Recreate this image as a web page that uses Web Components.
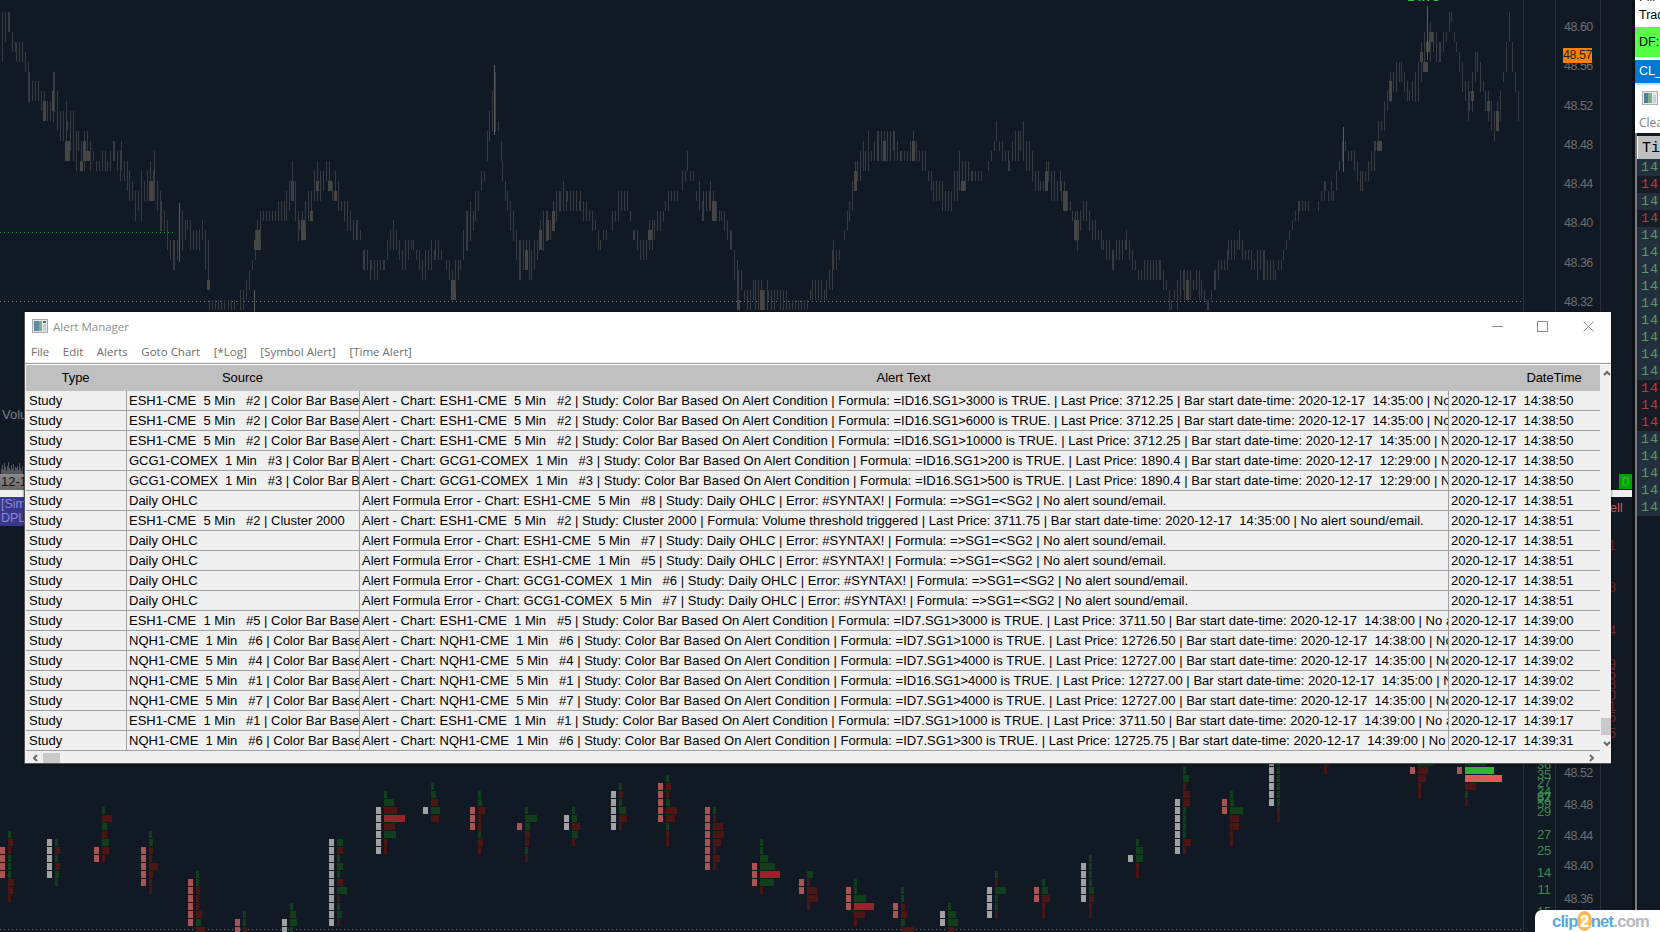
<!DOCTYPE html>
<html>
<head>
<meta charset="utf-8">
<title>Alert Manager</title>
<style>
html, body { margin: 0; padding: 0; background: #111a24; overflow: hidden; }
</style>
</head>
<body>
<trade-desktop>
    <price-chart slot="chart"></price-chart>
    <side-panel slot="side"></side-panel>
    <alert-window slot="window" heading="Alert Manager">
        <span slot="menu">File</span>
        <span slot="menu">Edit</span>
        <span slot="menu">Alerts</span>
        <span slot="menu">Goto Chart</span>
        <span slot="menu">[*Log]</span>
        <span slot="menu">[Symbol Alert]</span>
        <span slot="menu">[Time Alert]</span>
        <alert-table></alert-table>
    </alert-window>
    <clip-logo slot="logo"></clip-logo>
</trade-desktop>

<script>
"use strict"
{
    const template = document.createElement('template');
    template.innerHTML = `
<style>
:host { display: block; position: relative; width: 1660px; height: 932px; overflow: hidden; background: #111a24; }
.row { display: flex; height: 100%; }
.chart { flex: 1; min-width: 0; }
</style>
<div class="row">
    <div class="chart"><slot name="chart"></slot></div>
    <slot name="side"></slot>
</div>
<slot name="window"></slot>
<slot name="logo"></slot>
`;
    class TradeDesktop extends HTMLElement {
        constructor() {
            super();
            this.attachShadow({ mode: 'open' }).appendChild(template.content.cloneNode(true));
        }
    }
    customElements.define('trade-desktop', TradeDesktop);
}

/* Chart behind the window. Wicks follow a trace of the reference, footprint cells are listed by hand. */
{
    // [zoom x, top, bottom], y is 3x, x is 2.24x for the first list and 1.912x for the second
    const traceA = [[5,20,190],[20,0,100],[35,110,195],[50,110,190],[65,195,310],[85,220,310],[105,290,400],[120,195,340],[135,345,430],[150,290,490],[175,370,520],[195,370,490],[215,460,520],[240,460,520],[255,400,490],[270,430,550],[290,490,610],[310,520,670],[330,490,610],[345,460,610],[360,580,700],[375,640,760],[390,700,845],[402,610,790],[420,640,700],[440,670,790],[452,640,730],[465,700,870],[469,900,930],[510,900,930],[545,845,930],[565,760,815],[575,640,760],[590,610,670],[610,610,670],[640,580,670],[655,460,610],[670,640,730],[690,550,670],[710,490,610],[730,460,550],[750,520,610],[770,580,670],[800,640,730],[815,730,815],[830,760,845],[860,760,815],[880,640,730],[900,730,815],[925,700,760],[945,760,845],[975,700,790],[1000,760,790],[1012,790,900],[1030,760,815],[1045,610,760],[1065,550,670],[1085,490,550],[1095,340,460],[1108,195,400],[1125,460,550],[1135,550,640],[1150,640,730],[1165,700,845],[1190,700,845],[1225,610,730],[1255,550,640],[1270,550,610],[1300,580,640],[1320,610,670],[1345,670,760],[1365,670,700],[1390,550,640],[1405,550,640],[1420,670,730],[1440,700,785],[1465,640,730],[1490,580,640],[1520,550,580],[1540,460,520],[1565,520,640]];
    const traceB = [[5,550,670],[20,550,640],[40,610,670],[60,670,760],[72,760,930],[90,870,930],[105,815,930],[130,845,930],[205,900,930],[215,815,905],[240,845,905],[255,695,845],[270,760,785],[285,580,670],[300,460,550],[315,400,520],[340,400,490],[370,370,490],[385,460,490],[408,400,490],[430,430,520],[445,520,610],[480,550,640],[495,460,580],[520,490,550],[550,490,520],[565,370,430],[590,460,520],[612,340,460],[630,430,520],[650,520,580],[665,430,580],[690,520,610],[712,610,670],[720,640,755],[738,580,670],[755,670,730],[770,700,755],[790,730,815],[815,695,760],[838,785,845],[880,755,845],[900,870,930],[925,785,900],[958,815,900],[972,900,930],[985,785,870],[1010,725,790],[1030,695,755],[1060,755,815],[1078,725,845],[1100,785,845],[1115,755,790],[1132,640,695],[1145,580,640],[1175,610,640],[1195,520,580],[1210,550,610],[1228,400,460],[1250,430,520],[1265,520,580],[1290,400,490],[1308,310,370],[1320,195,310],[1340,165,255],[1355,255,310],[1372,165,285],[1390,15,165],[1415,110,195],[1435,20,75],[1445,110,165],[1470,230,400],[1485,135,225],[1500,255,340],[1518,310,430],[1530,255,370],[1547,20,130],[1558,195,285],[1565,255,370]];
    const trace = traceA.map(p => [p[0] / 2.24, p[1] / 3, p[2] / 3])
        .concat(traceB.map(p => [700 + p[0] / 1.912, p[1] / 3, p[2] / 3]));

    // [left x, left colour, from row, to row, right x, "row:width:colour" ...]
    const cells = [
        [0,'p',11,14,8,'9:3:g 10:5:r 11:3:r 12:3:g 13:3:g 14:3:g 15:6:r 16:5:r 17:3:r'],
        [47,'s',10,14,55,'10:3:g 11:5:r 12:3:g 13:5:r 14:4:g 15:3:g'],
        [94,'p',11,12,102,'6:3:g 7:10:r 8:5:g 9:5:r 10:7:g 11:7:r 12:3:r'],
        [141,'p',11,15,149,'9:3:g 10:4:g 11:4:r 12:3:r 13:9:r 14:4:r 15:3:r 16:3:r'],
        [188,'p',15,20,196,'14:3:g 15:3:g 16:4:r 17:3:r 18:3:r 19:6:r 20:5:g 21:9:r'],
        [235,'p',20,21,243,'19:3:g 20:3:g 21:4:r'],
        [282,'s',20,21,290,'18:3:g 19:6:g 20:7:g 21:3:g'],
        [329,'s',10,20,337,'10:6:g 11:6:r 12:3:g 13:6:g 14:3:g 15:6:r 16:10:g 17:3:r 18:3:g 19:5:g 20:3:r'],
        [376,'s',6,11,384,'4:3:g 5:10:g 6:13:r 7:21:b 8:11:r 9:12:g 10:3:r 11:3:r'],
        [423,'s',6,6,431,'3:3:g 4:5:g 5:7:r 6:9:g 7:8:r'],
        [470,'p',6,8,478,'4:3:g 5:4:g 6:7:r 7:3:r 8:3:r 9:3:g 10:5:r 11:3:r'],
        [517,'p',8,8,525,'6:3:g 7:12:g 8:5:g 9:5:r 10:4:r 11:3:g 12:3:r'],
        [564,'s',7,8,572,'6:3:g 7:5:g 8:8:r 9:6:g 10:3:r'],
        [611,'s',4,8,619,'3:3:g 4:4:r 5:3:g 6:7:g 7:8:r 8:3:r'],
        [658,'p',3,7,666,'2:3:g 3:5:r 4:3:r 5:4:g 6:11:r 7:9:r 8:3:g 9:3:r 10:3:r'],
        [705,'p',6,13,713,'6:3:g 7:3:r 8:10:r 9:11:r 10:8:r 11:3:r 12:7:r 13:3:r'],
        [752,'p',13,15,760,'10:3:g 11:3:g 12:8:g 13:15:g 14:20:b 15:14:g 16:3:r'],
        [799,'p',15,16,807,'14:6:g 15:3:r 16:10:r 17:11:r 18:3:r'],
        [846,'p',16,18,854,'15:3:g 16:3:g 17:12:g 18:20:b 19:11:r 20:3:r'],
        [893,'p',18,19,901,'16:3:g 17:3:g 18:4:r 19:6:r 20:4:g 21:13:r'],
        [940,'s',19,20,948,'18:3:g 19:8:g 20:10:g 21:6:r'],
        [987,'s',16,19,995,'14:3:g 15:3:r 16:11:g 17:3:g 18:3:g 19:3:r'],
        [1034,'p',16,17,1042,'15:3:g 16:6:g 17:8:r 18:3:r 19:3:r'],
        [1081,'s',13,17,1089,'12:3:g 13:3:g 14:3:g 15:3:g 16:5:g 17:5:r 18:3:r 19:3:r'],
        [1128,'s',12,12,1136,'10:3:g 11:7:g 12:7:g 13:3:r 14:3:r'],
        [1175,'s',5,11,1183,'1:3:g 2:6:g 3:3:r 4:7:r 5:7:r 6:3:g 7:3:g 8:3:g 9:3:g 10:8:r 11:3:r'],
        [1222,'p',5,6,1230,'4:3:g 5:4:g 6:13:g 7:9:r 8:9:r 9:3:r 10:3:r'],
        [1269,'s',0,5,1277,'0:3:g 1:3:g 2:3:g 3:3:g 4:3:g 5:3:g 6:3:r 7:3:r'],
        [1316,'',0,-1,1324,'0:5:r 1:3:r'],
        [1410,'p',1,1,1418,'0:15:g 1:10:r 2:8:r 3:3:r 4:3:r'],
        [1457,'p',1,1,1465,'0:21:g 1:29:l 2:37:m 3:11:r 4:3:g 5:3:r']
    ];
    const colours = { p: '#a85454', s: '#a2a2a2', g: '#123f1b', r: '#4c1614', b: '#96242a', l: '#30b530', m: '#dc5a5a' };

    const prices = [['48.60', 27], ['48.56', 66], ['48.52', 106], ['48.48', 145], ['48.44', 184], ['48.40', 223], ['48.36', 263], ['48.32', 302],
        ['48.52', 773], ['48.48', 805], ['48.44', 836], ['48.40', 866], ['48.36', 899]];
    const volumes = [['36', 765], ['35', 775], ['27', 783], ['34', 792], ['37', 797], ['62', 798], ['59', 804], ['29', 812],
        ['27', 835], ['25', 851], ['14', 873], ['11', 890], ['15', 912]];
    const askNumbers = [['1', 545], ['8', 587], ['4', 630], ['9', 664], ['5', 674], ['8', 684], ['0', 695], ['1', 706], ['5', 717], ['5', 733]];

    function wicks() {
        let seed = 7;
        const rnd = () => { seed = (seed * 16807) % 2147483647; return seed / 2147483647; };
        const snap = y => Math.round(y / 9.93) * 9.93 + 2;
        let out = '';
        for (let i = 0; i < trace.length - 1; i++) {
            const a = trace[i], b = trace[i + 1];
            for (let x = a[0]; x < b[0]; x += 3) {
                const f = (x - a[0]) / (b[0] - a[0]);
                const top = a[1] + (b[1] - a[1]) * f, bot = a[2] + (b[2] - a[2]) * f;
                const r1 = rnd() * rnd(), r2 = rnd() * rnd();
                const y1 = Math.max(0, snap(top + (bot - top) * r1 * 0.5));
                const y2 = Math.min(310, snap(bot - (bot - top) * r2 * 0.5));
                if (y2 <= y1) continue;
                const px = Math.round(x);
                out += `<rect x="${px}" y="${y1.toFixed(0)}" width="1" height="${(y2 - y1).toFixed(0)}" fill="#383c40"/>`;
                if (rnd() < 0.26 && y2 - y1 > 20) {
                    const h = Math.min(y2 - y1 - 10, 10 + Math.floor(rnd() * 2) * 10);
                    const by = snap(y1 + 5 + rnd() * (y2 - y1 - h - 5));
                    out += `<rect x="${px - 1}" y="${by.toFixed(0)}" width="${rnd() < 0.4 ? 5 : 3}" height="${h.toFixed(0)}" fill="#464646"/>`;
                }
            }
        }
        // a few taller single spikes from the reference
        [[494, 65, 135], [179, 203, 262], [254, 290, 360], [1343, 127, 172], [1427, 6, 60]].forEach(s => {
            out += `<rect x="${s[0]}" y="${s[1]}" width="1" height="${s[2] - s[1]}" fill="#5a5d60"/>`;
        });
        return out;
    }

    function footprint() {
        let out = '';
        cells.forEach(c => {
            for (let r = c[2]; r <= c[3]; r++) {
                out += `<rect x="${c[0]}" y="${759 + 8 * r}" width="5" height="7" fill="${colours[c[1]]}"/>`;
            }
            c[5].split(' ').forEach(cell => {
                const p = cell.split(':');
                out += `<rect x="${c[4]}" y="${759 + 8 * p[0]}" width="${p[1]}" height="7" fill="${colours[p[2]]}"/>`;
            });
        });
        return out;
    }

    const spans = (list, cls) => list.map(p => `<span class="${cls}" style="top:${p[1] - 9}px">${p[0]}</span>`).join('');

    const template = document.createElement('template');
    template.innerHTML = `
<style>
:host { display: block; position: relative; height: 932px; background: #111a24; overflow: hidden; font-family: "Liberation Sans", Arial, sans-serif; }
svg { position: absolute; left: 0; top: 0; }
span, div { position: absolute; }
.price { left: 1564px; width: 28px; text-align: center; font-size: 12.5px; line-height: 18px; color: #6b6e70; letter-spacing: -0.5px; }
.vol { left: 1535px; width: 18px; text-align: center; font-size: 13px; line-height: 18px; color: #3f8a4c; letter-spacing: -0.3px; }
.ask { left: 1606px; width: 10px; text-align: right; font-size: 14px; line-height: 18px; color: #7c2222; }
.last { left: 1563px; top: 48px; width: 29px; height: 15px; background: #ff8000; color: #222; font-size: 12.5px; line-height: 15px; text-align: center; letter-spacing: -0.5px; }
.gain { left: 1403px; top: -10px; font-size: 12px; line-height: 14px; color: #28d24a; font-weight: bold; letter-spacing: 0.5px; }
.vol-label { left: 2px; top: 406px; font-size: 13px; line-height: 18px; color: #7b8086; }
.date { left: 0; top: 474px; width: 24px; height: 16px; overflow: hidden; background: linear-gradient(#8a8a8a, #666); color: #111; font-size: 13px; line-height: 16px; padding-left: 1px; box-sizing: border-box; white-space: nowrap; }
.strip { left: 0; top: 490px; width: 1632px; height: 7px; background: #f0f0f0; }
.sim { left: 0; top: 497px; width: 24px; height: 29px; overflow: hidden; background: #38378c; color: #8d8ad2; font-size: 12.5px; line-height: 14px; white-space: nowrap; padding-left: 1px; box-sizing: border-box; }
.zero { left: 1619px; top: 474px; width: 13px; height: 15px; background: #00a400; color: #35c335; font-size: 13px; line-height: 15px; text-align: center; }
.sell { left: 1601px; top: 499px; font-size: 13px; line-height: 18px; color: #d8504c; }
.edge { left: 1632px; top: 0; width: 3px; height: 932px; background: #0b1016; }
</style>
<svg width="1635" height="932" shape-rendering="crispEdges">
    <rect x="1523" y="0" width="1" height="932" fill="#2b3036"/>
    <rect x="1555" y="0" width="1" height="932" fill="#2b3036"/>
    <rect x="1600" y="0" width="1" height="932" fill="#2b3036"/>
    <line x1="0" y1="232.5" x2="175" y2="232.5" stroke="#2b9a4c" stroke-dasharray="1 3"/>
    <line x1="0" y1="301.5" x2="1523" y2="301.5" stroke="#777c80" stroke-dasharray="1 3"/>
    <line x1="0" y1="929.5" x2="1523" y2="929.5" stroke="#6b7074" stroke-dasharray="1 3"/>
    <g id="bars"></g>
    <g id="hist"></g>
</svg>
<div id="labels"></div>
<span class="gain">-14.75</span>
<span class="last">48.57</span>
<span class="vol-label">Volu</span>
<span class="date">12-17</span>
<div class="strip"></div>
<div class="sim">[Sim]<br>DPL:</div>
<span class="zero">0</span>
<span class="sell">Sell</span>
<div class="edge"></div>
`;
    class PriceChart extends HTMLElement {
        constructor() {
            super();
            const shadow = this.attachShadow({ mode: 'open' });
            shadow.appendChild(template.content.cloneNode(true));
            shadow.getElementById('bars').innerHTML = wicks() + footprint();
            let hist = '';
            [5, 9, 4, 11, 7, 3, 8, 12, 6, 4, 9, 5, 10, 3, 7, 6, 8, 4, 11, 6, 3, 8].forEach((h, i) => {
                hist += `<rect x="${i + 1}" y="${474 - h}" width="1" height="${h}" fill="#55585c"/>`;
            });
            shadow.getElementById('hist').innerHTML = hist;
            shadow.getElementById('labels').innerHTML = spans(prices, 'price') + spans(volumes, 'vol') + spans(askNumbers, 'ask');
        }
    }
    customElements.define('price-chart', PriceChart);
}

{
    const rows = 'GRGRGGGGGGGGGRRRGGGGG'.split('');
    const template = document.createElement('template');
    template.innerHTML = `
<style>
:host { display: flex; flex-direction: column; width: 25px; height: 932px; flex: none; background: #111a24; overflow: hidden; font-family: "Liberation Sans", Arial, sans-serif; font-size: 12.5px; color: #000; white-space: nowrap; }
.top { height: 27px; background: #fff; padding-left: 4px; overflow: hidden; }
.cut { height: 4px; overflow: hidden; color: #222; }
.cut span { display: block; line-height: 14px; margin-top: -10px; }
.trade { line-height: 22px; }
.df { height: 30px; line-height: 30px; background: #55ff44; padding-left: 4px; overflow: hidden; }
.sep { height: 3px; background: #fff; }
.sym { height: 23px; line-height: 23px; background: #0078d7; color: #fff; padding-left: 4px; overflow: hidden; }
.head { height: 50px; background: #fff; border-top: 2px solid #d8d8d8; box-sizing: border-box; padding-left: 7px; color: #7f7f7f; overflow: hidden; display: flex; flex-direction: column; }
.head svg { margin-top: 6px; flex: none; }
.head span { margin: 10px 0 0 -3px; font-family: "Open Sans", sans-serif; font-size: 12px; line-height: 16px; }
.list { flex: 1; border-left: 2px solid #7a7a7a; display: flex; flex-direction: column; }
.title { height: 23px; margin-top: 3px; background: #c0c0c0; border-left: 1px solid #fff; box-sizing: border-box; padding-left: 4px; font: 15px/25px "Liberation Mono", monospace; color: #000; overflow: hidden; }
.tick { height: 17px; font: 13.5px/18px "Liberation Mono", monospace; letter-spacing: 0.9px; padding-left: 4px; overflow: hidden; }
.G { background: #22303e; color: #5c9a60; }
.R { background: #161b24; color: #b04040; }
</style>
<div class="top"><div class="cut"><span>Fill</span></div><div class="trade">Trade</div></div>
<div class="df">DF:1</div>
<div class="sep"></div>
<div class="sym">CL_5</div>
<div class="head">
    <svg width="16" height="14" viewBox="0 0 16 14"><rect x="0.5" y="0.5" width="15" height="13" fill="#e8e8e8" stroke="#b0b0b0"/><rect x="2" y="2" width="4" height="10" fill="#4f7f9a"/><rect x="6" y="2" width="4" height="10" fill="#7fae8f"/><rect x="11" y="4" width="3" height="8" fill="#c8d0d4"/></svg>
    <span>Clear</span>
</div>
<div class="list">
    <div class="title">Time</div>
    <div id="ticks"></div>
</div>
`;
    class SidePanel extends HTMLElement {
        constructor() {
            super();
            const shadow = this.attachShadow({ mode: 'open' });
            shadow.appendChild(template.content.cloneNode(true));
            shadow.getElementById('ticks').innerHTML = rows.map(k => `<div class="tick ${k}">14:</div>`).join('');
        }
    }
    customElements.define('side-panel', SidePanel);
}

{
    const template = document.createElement('template');
    template.innerHTML = `
<style>
:host { display: flex; flex-direction: column; position: absolute; left: 24px; top: 312px; width: 1587px; height: 452px; box-sizing: border-box; background: #fff; border-left: 1px solid #555; border-bottom: 1px solid #555; box-shadow: 0 0 2px rgba(0,0,0,.7); font-family: "Open Sans", "Noto Sans", sans-serif; }
.title { display: flex; align-items: center; height: 28px; flex: none; padding-left: 7px; color: #8f8f8f; font-size: 11.5px; }
.title svg.app { margin-right: 5px; }
.title .text { flex: 1; }
.btn { display: flex; width: 46px; height: 28px; align-items: center; justify-content: center; }
.menu { display: flex; align-items: center; gap: 13.6px; height: 22px; flex: none; padding: 1px 0 0 6px; box-sizing: border-box; font-size: 11.5px; color: #6e6e6e; }
.frame { height: 3px; flex: none; background: linear-gradient(#f0f0f0 0 1px, #a0a0a0 1px 2px, #fff 2px); }
.body { flex: 1; display: flex; min-height: 0; background: #f0f0f0; padding-left: 1px; }
.vbar { width: 11px; flex: none; position: relative; background: #f0f0f0; }
.hbar { height: 12px; flex: none; position: relative; background: #f0f0f0; }
.thumb { position: absolute; background: #c9c9c9; }
.vbar .thumb { left: 1px; right: 0; top: 353px; height: 17px; }
.hbar .thumb { left: 18px; top: 2px; width: 17px; height: 10px; }
.vbar svg, .hbar svg { position: absolute; }
.main { flex: 1; display: flex; flex-direction: column; min-width: 0; }
</style>
<div class="title">
    <svg class="app" width="16" height="14" viewBox="0 0 16 14"><rect x="0.5" y="0.5" width="15" height="13" fill="#e8e8e8" stroke="#a8a8a8"/><rect x="2" y="2" width="5" height="10" fill="#5a8aa6"/><rect x="7" y="2" width="3" height="10" fill="#7faf90"/><rect x="11" y="2" width="3" height="2" fill="#4f6f80"/><rect x="11" y="5" width="3" height="7" fill="#c6ced2"/></svg>
    <span class="text" id="heading"></span>
    <span class="btn" style="margin-right:-1px"><svg width="11" height="11" viewBox="0 0 11 11"><path d="M0 5.5H11" stroke="#8c8c8c"/></svg></span>
    <span class="btn"><svg width="11" height="11" viewBox="0 0 11 11"><rect x="0.5" y="0.5" width="10" height="10" fill="none" stroke="#8c8c8c"/></svg></span>
    <span class="btn"><svg width="11" height="11" viewBox="0 0 11 11"><path d="M0.5 0.5L10.5 10.5M10.5 0.5L0.5 10.5" stroke="#8c8c8c"/></svg></span>
</div>
<div class="menu"><slot name="menu"></slot></div>
<div class="frame"></div>
<div class="body">
    <div class="main"><slot></slot></div>
    <div class="vbar">
        <svg style="left:3px;top:5px" width="8" height="6" viewBox="0 0 8 6"><path d="M1 5L4 2L7 5" fill="none" stroke="#6a6a6a" stroke-width="2"/></svg>
        <div class="thumb"></div>
        <svg style="left:3px;top:376px" width="8" height="6" viewBox="0 0 8 6"><path d="M1 1L4 4L7 1" fill="none" stroke="#6a6a6a" stroke-width="2"/></svg>
    </div>
</div>
<div class="hbar">
    <svg style="left:7px;top:3px" width="6" height="8" viewBox="0 0 6 8"><path d="M5 1L2 4L5 7" fill="none" stroke="#6a6a6a" stroke-width="2"/></svg>
    <div class="thumb"></div>
    <svg style="left:1564px;top:3px" width="6" height="8" viewBox="0 0 6 8"><path d="M1 1L4 4L1 7" fill="none" stroke="#6a6a6a" stroke-width="2"/></svg>
</div>
`;
    class AlertWindow extends HTMLElement {
        constructor() {
            super();
            const shadow = this.attachShadow({ mode: 'open' });
            shadow.appendChild(template.content.cloneNode(true));
            shadow.getElementById('heading').textContent = this.getAttribute('heading');
        }
    }
    customElements.define('alert-window', AlertWindow);
}

{
    const grid = 'grid-template-columns: 101px 233px 1089px 151px;';
    const template = document.createElement('template');
    template.innerHTML = `
<style>
:host { display: grid; ${grid} height: 20px; box-sizing: border-box; border-bottom: 1px solid #a0a0a0; background: #f0f0f0; color: #000; font: 13px/19px "Liberation Sans", Arial, sans-serif; white-space: pre; }
div { overflow: hidden; padding-left: 3px; border-right: 1px solid #a0a0a0; }
div:nth-of-type(n+2) { padding-left: 2px; }
div:nth-of-type(3) { letter-spacing: 0.017px; }
div:nth-of-type(4) { letter-spacing: -0.1px; border-right: 0; }
:host(.head) { height: 26px; background: #c0c0c0; border-bottom: 0; line-height: 26px; text-align: center; }
:host(.head) div { border-right: 0; padding: 0 2px 0 0; }
:host(.head) div:last-child { padding: 0 0 0 59px; }
</style>
<div id="a"></div><div id="b"></div><div id="c"></div><div id="d"></div>
`;
    class AlertRow extends HTMLElement {
        constructor() {
            super();
            this.attachShadow({ mode: 'open' }).appendChild(template.content.cloneNode(true));
        }
        set cells(list) {
            ['a', 'b', 'c', 'd'].forEach((id, i) => { this.shadowRoot.getElementById(id).textContent = list[i]; });
        }
    }
    customElements.define('alert-row', AlertRow);

    const DAY = '2020-12-17  ';
    const names = { E: 'ESH1-CME', G: 'GCG1-COMEX', N: 'NQH1-CME' };
    const chart = (s, tf, n) => `${names[s]}  ${tf} Min   #${n}`;
    const colorBar = (s, tf, n, f, price, bar, at) => ['Study', `${chart(s, tf, n)} | Color Bar Based On Alert Condition`,
        `Alert - Chart: ${chart(s, tf, n)} | Study: Color Bar Based On Alert Condition | Formula: =${f} is TRUE. | Last Price: ${price} | Bar start date-time: ${DAY}${bar} | No alert sound/email.`,
        DAY + at];
    const syntax = (s, tf, n, at) => ['Study', 'Daily OHLC',
        `Alert Formula Error - Chart: ${chart(s, tf, n)} | Study: Daily OHLC | Error: #SYNTAX! | Formula: =>SG1=<SG2 | No alert sound/email.`,
        DAY + at];
    const data = [
        colorBar('E', 5, 2, 'ID16.SG1>3000', '3712.25', '14:35:00', '14:38:50'),
        colorBar('E', 5, 2, 'ID16.SG1>6000', '3712.25', '14:35:00', '14:38:50'),
        colorBar('E', 5, 2, 'ID16.SG1>10000', '3712.25', '14:35:00', '14:38:50'),
        colorBar('G', 1, 3, 'ID16.SG1>200', '1890.4', '12:29:00', '14:38:50'),
        colorBar('G', 1, 3, 'ID16.SG1>500', '1890.4', '12:29:00', '14:38:50'),
        syntax('E', 5, 8, '14:38:51'),
        ['Study', `${chart('E', 5, 2)} | Cluster 2000`,
            `Alert - Chart: ${chart('E', 5, 2)} | Study: Cluster 2000 | Formula: Volume threshold triggered | Last Price: 3711.75 | Bar start date-time: ${DAY}14:35:00 | No alert sound/email.`,
            DAY + '14:38:51'],
        syntax('E', 5, 7, '14:38:51'),
        syntax('E', 1, 5, '14:38:51'),
        syntax('G', 1, 6, '14:38:51'),
        syntax('G', 5, 7, '14:38:51'),
        colorBar('E', 1, 5, 'ID7.SG1>3000', '3711.50', '14:38:00', '14:39:00'),
        colorBar('N', 1, 6, 'ID7.SG1>1000', '12726.50', '14:38:00', '14:39:00'),
        colorBar('N', 5, 4, 'ID7.SG1>4000', '12727.00', '14:35:00', '14:39:02'),
        colorBar('N', 5, 1, 'ID16.SG1>4000', '12727.00', '14:35:00', '14:39:02'),
        colorBar('N', 5, 7, 'ID7.SG1>4000', '12727.00', '14:35:00', '14:39:02'),
        colorBar('E', 1, 1, 'ID7.SG1>1000', '3711.50', '14:39:00', '14:39:17'),
        colorBar('N', 1, 6, 'ID7.SG1>300', '12725.75', '14:39:00', '14:39:31')
    ];

    class AlertTable extends HTMLElement {
        constructor() {
            super();
            const shadow = this.attachShadow({ mode: 'open' });
            shadow.innerHTML = '<style>:host { display: block; width: 1574px; height: 386px; overflow: hidden; }</style>';
            const head = document.createElement('alert-row');
            head.className = 'head';
            head.cells = ['Type', 'Source', 'Alert Text', 'DateTime'];
            shadow.appendChild(head);
            data.forEach(d => {
                const row = document.createElement('alert-row');
                row.cells = d;
                shadow.appendChild(row);
            });
        }
    }
    customElements.define('alert-table', AlertTable);
}

{
    const template = document.createElement('template');
    template.innerHTML = `
<style>
:host { display: flex; align-items: center; position: absolute; left: 1535px; top: 910px; width: 125px; height: 22px; box-sizing: border-box; padding-left: 17px; background: #fff; border-top-left-radius: 7px; font: bold 16.5px/22px "Liberation Sans", Arial, sans-serif; color: #58a8e0; letter-spacing: -0.7px; white-space: pre; }
b { display: inline-block; width: 15px; height: 20px; margin: 0 -1px; border-radius: 50%; background: radial-gradient(#ffe08a, #f0962a); color: #fff; text-align: center; line-height: 20px; }
i { font-style: normal; color: #b4b8bc; }
</style>
<span>clip</span><b>2</b><span>net<i>.com</i></span>
`;
    class ClipLogo extends HTMLElement {
        constructor() {
            super();
            this.attachShadow({ mode: 'open' }).appendChild(template.content.cloneNode(true));
        }
    }
    customElements.define('clip-logo', ClipLogo);
}
</script>
</body>
</html>
